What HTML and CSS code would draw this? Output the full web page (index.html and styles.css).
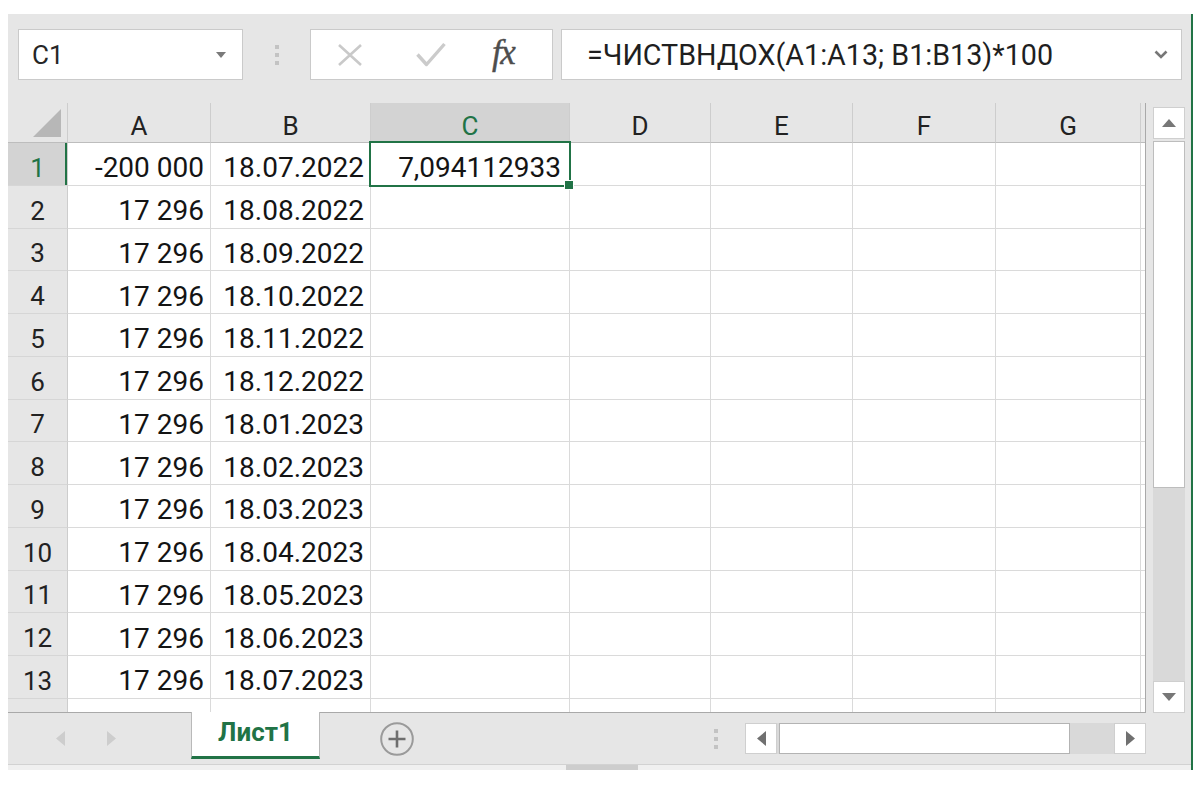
FILE: index.html
```html
<!DOCTYPE html>
<html lang="ru">
<head>
<meta charset="utf-8">
<title>Excel</title>
<link rel="stylesheet" href="styles.css">
</head>
<body>
<div class="app">
  <div class="fbar">
    <div class="namebox">
      <span>C1</span>
      <svg class="nb-caret" width="10" height="6" viewBox="0 0 10 6"><path d="M0 0H10L5 6Z" fill="#7a7a7a"/></svg>
    </div>
    <div class="grip"><i></i><i></i><i></i></div>
    <div class="fxbox">
      <svg class="ic-x" width="26" height="22" viewBox="0 0 26 22"><path d="M2 1L24 21M24 1L2 21" stroke="#c9c9c9" stroke-width="2.6" fill="none"/></svg>
      <svg class="ic-ok" width="30" height="25" viewBox="0 0 30 25"><path d="M1.5 12.5L10.5 22.5L28.5 2" stroke="#cbcbcb" stroke-width="3.4" fill="none" stroke-linejoin="round"/></svg>
      <span class="fx">fx</span>
    </div>
    <div class="formula">
      <span class="ftext">=ЧИСТВНДОХ(A1:A13; B1:B13)*100</span>
      <svg class="chev" width="14" height="9" viewBox="0 0 14 9"><path d="M1.5 1.5L7 7L12.5 1.5" stroke="#777" stroke-width="2.6" fill="none"/></svg>
    </div>
  </div>

  <div class="main">
    <div class="sheet">
      <div class="grid">
        <div class="corner"><svg width="28" height="28" viewBox="0 0 28 28"><path d="M28 0V28H0Z" fill="#b7b7b7"/></svg></div>
        <div class="ch">A</div><div class="ch">B</div><div class="ch selh">C</div><div class="ch">D</div><div class="ch">E</div><div class="ch">F</div><div class="ch">G</div><div class="ch"></div>

        <div class="rh selr">1</div><div class="c num">-200 000</div><div class="c num">18.07.2022</div><div class="c num sel">7,094112933</div><div class="c"></div><div class="c"></div><div class="c"></div><div class="c"></div><div class="c"></div>
        <div class="rh">2</div><div class="c num">17 296</div><div class="c num">18.08.2022</div><div class="c"></div><div class="c"></div><div class="c"></div><div class="c"></div><div class="c"></div><div class="c"></div>
        <div class="rh">3</div><div class="c num">17 296</div><div class="c num">18.09.2022</div><div class="c"></div><div class="c"></div><div class="c"></div><div class="c"></div><div class="c"></div><div class="c"></div>
        <div class="rh">4</div><div class="c num">17 296</div><div class="c num">18.10.2022</div><div class="c"></div><div class="c"></div><div class="c"></div><div class="c"></div><div class="c"></div><div class="c"></div>
        <div class="rh">5</div><div class="c num">17 296</div><div class="c num">18.11.2022</div><div class="c"></div><div class="c"></div><div class="c"></div><div class="c"></div><div class="c"></div><div class="c"></div>
        <div class="rh">6</div><div class="c num">17 296</div><div class="c num">18.12.2022</div><div class="c"></div><div class="c"></div><div class="c"></div><div class="c"></div><div class="c"></div><div class="c"></div>
        <div class="rh">7</div><div class="c num">17 296</div><div class="c num">18.01.2023</div><div class="c"></div><div class="c"></div><div class="c"></div><div class="c"></div><div class="c"></div><div class="c"></div>
        <div class="rh">8</div><div class="c num">17 296</div><div class="c num">18.02.2023</div><div class="c"></div><div class="c"></div><div class="c"></div><div class="c"></div><div class="c"></div><div class="c"></div>
        <div class="rh">9</div><div class="c num">17 296</div><div class="c num">18.03.2023</div><div class="c"></div><div class="c"></div><div class="c"></div><div class="c"></div><div class="c"></div><div class="c"></div>
        <div class="rh">10</div><div class="c num">17 296</div><div class="c num">18.04.2023</div><div class="c"></div><div class="c"></div><div class="c"></div><div class="c"></div><div class="c"></div><div class="c"></div>
        <div class="rh">11</div><div class="c num">17 296</div><div class="c num">18.05.2023</div><div class="c"></div><div class="c"></div><div class="c"></div><div class="c"></div><div class="c"></div><div class="c"></div>
        <div class="rh">12</div><div class="c num">17 296</div><div class="c num">18.06.2023</div><div class="c"></div><div class="c"></div><div class="c"></div><div class="c"></div><div class="c"></div><div class="c"></div>
        <div class="rh">13</div><div class="c num">17 296</div><div class="c num">18.07.2023</div><div class="c"></div><div class="c"></div><div class="c"></div><div class="c"></div><div class="c"></div><div class="c"></div>
        <div class="rh"></div><div class="c"></div><div class="c"></div><div class="c"></div><div class="c"></div><div class="c"></div><div class="c"></div><div class="c"></div><div class="c"></div>
      </div>
    </div>
    <div class="vscroll">
      <div class="sbtn"><svg width="14" height="8" viewBox="0 0 14 8"><path d="M7 0L14 8H0Z" fill="#777"/></svg></div>
      <div class="vthumb"></div>
      <div class="vtrack"></div>
      <div class="sbtn"><svg width="14" height="8" viewBox="0 0 14 8"><path d="M0 0H14L7 8Z" fill="#777"/></svg></div>
    </div>
  </div>

  <div class="tabbar">
    <div class="tabnav">
      <svg width="9" height="15" viewBox="0 0 9 15"><path d="M9 0V15L0 7.5Z" fill="#cdcdcd"/></svg>
      <svg width="9" height="15" viewBox="0 0 9 15"><path d="M0 0V15L9 7.5Z" fill="#cdcdcd"/></svg>
    </div>
    <div class="tab">Лист1</div>
    <div class="addsheet"><svg width="34" height="34" viewBox="0 0 34 34"><circle cx="17" cy="17" r="15.8" fill="none" stroke="#9a9a9a" stroke-width="2"/><path d="M17 8.5V25.5M8.5 17H25.5" stroke="#6e6e6e" stroke-width="2.6"/></svg></div>
    <div class="grip tgrip"><i></i><i></i><i></i></div>
    <div class="hscroll">
      <div class="hbtn"><svg width="9" height="15" viewBox="0 0 9 15"><path d="M9 0V15L0 7.5Z" fill="#707070"/></svg></div>
      <div class="hthumb"></div>
      <div class="htrack"></div>
      <div class="hbtn"><svg width="9" height="15" viewBox="0 0 9 15"><path d="M0 0V15L9 7.5Z" fill="#707070"/></svg></div>
    </div>
  </div>
  <div class="strip"><div class="handle"></div></div>
</div>
</body>
</html>
```

FILE: styles.css
```css
* { box-sizing: border-box; }

body {
  margin: 0;
  background: #ffffff;
  font-family: Roboto, "Liberation Sans", sans-serif;
  color: #1b1b1b;
}

.app {
  margin: 14px 0 0 8px;
  width: 1185px;
  height: 756px;
  background: #e6e6e6;
  border-right: 2px solid #217346;
  display: flex;
  flex-direction: column;
}

/* formula bar */
.fbar {
  height: 66px;
  padding: 15px 0 0 10px;
  display: flex;
  align-items: flex-start;
}

.namebox {
  width: 225px;
  height: 51px;
  background: #fff;
  border: 1px solid #cacaca;
  display: flex;
  align-items: center;
  justify-content: space-between;
  padding: 0 16px 0 13px;
  font-size: 26px;
  color: #262626;
}

.grip {
  width: 67px;
  height: 51px;
  display: flex;
  flex-direction: column;
  align-items: center;
  justify-content: center;
  gap: 4px;
}
.grip i {
  display: block;
  width: 4px;
  height: 4px;
  background: #c3c3c3;
}

.fxbox {
  width: 243px;
  height: 51px;
  background: #fff;
  border: 1px solid #cacaca;
  display: flex;
  align-items: center;
  padding-left: 26px;
}
.ic-x { margin-top: 1px; }
.ic-ok { margin-left: 53px; }
.fx {
  margin-left: 46px;
  font-family: "Liberation Serif", serif;
  font-style: italic;
  font-size: 35px;
  color: #4d4d4d;
  letter-spacing: -1.5px;
  line-height: 1;
  margin-top: -4px;
  -webkit-text-stroke: 0.4px #4d4d4d;
}

.formula {
  margin-left: 8px;
  width: 621px;
  height: 51px;
  background: #fff;
  border: 1px solid #cacaca;
  display: flex;
  align-items: center;
  justify-content: space-between;
  padding: 0 13px 0 25px;
}
.ftext {
  font-size: 28.7px;
  color: #1f1f1f;
  white-space: nowrap;
}

/* grid */
.main {
  margin-top: 23px;
  height: 610px;
  display: flex;
}

.sheet {
  width: 1138px;
  height: 610px;
  overflow: hidden;
  border-right: 1px solid #a9a9a9;
  border-bottom: 1px solid #a9a9a9;
}

.grid {
  display: grid;
  grid-template-columns: 60px 143px 160px 199px 141px 142px 143px 145px 40px;
  grid-template-rows: 40px repeat(14, 42.75px);
  background: #fff;
}

.corner {
  background: #e6e6e6;
  border-right: 1px solid #cdcdcd;
  border-bottom: 1px solid #bdbdbd;
  display: flex;
  align-items: flex-end;
  justify-content: flex-end;
  padding: 0 6px 5px 0;
}

.ch {
  background: #e6e6e6;
  border-right: 1px solid #cdcdcd;
  border-bottom: 1px solid #bdbdbd;
  display: flex;
  align-items: center;
  justify-content: center;
  font-size: 26px;
  padding-top: 6px;
  color: #222;
}
.ch.selh {
  background: #d3d3d3;
  color: #217346;
}

.rh {
  background: #e6e6e6;
  border-right: 1px solid #cdcdcd;
  border-bottom: 1px solid #d6d6d6;
  display: flex;
  align-items: center;
  justify-content: center;
  font-size: 26px;
  padding-top: 8px;
  color: #222;
}
.rh.selr {
  background: #d3d3d3;
  color: #217346;
  box-shadow: inset -2px 0 0 #217346;
}

.c {
  border-right: 1px solid #dadada;
  border-bottom: 1px solid #dadada;
  display: flex;
  align-items: center;
  justify-content: flex-end;
  padding: 8px 6px 0 0;
  font-size: 28px;
  white-space: nowrap;
  color: #141414;
}
.c.sel {
  position: relative;
  padding-right: 8px;
}
.c.sel::after {
  content: "";
  position: absolute;
  top: -2px;
  left: -2px;
  right: -2px;
  bottom: -2px;
  border: 2.5px solid #217346;
}
.c.sel::before {
  content: "";
  position: absolute;
  right: -5px;
  bottom: -5px;
  width: 8px;
  height: 8px;
  background: #217346;
  border: 1px solid #fff;
  z-index: 2;
}

/* vertical scrollbar */
.vscroll {
  margin-left: 7px;
  width: 32px;
  height: 610px;
  display: flex;
  flex-direction: column;
  padding-top: 4px;
}
.sbtn {
  height: 32px;
  flex: none;
  background: #fff;
  border: 1px solid #cfcfcf;
  display: flex;
  align-items: center;
  justify-content: center;
}
.vthumb {
  margin-top: 2px;
  height: 347px;
  flex: none;
  background: #fff;
  border: 1px solid #bdbdbd;
}
.vtrack {
  flex: 1;
  background: #d9d9d9;
}

/* tab bar */
.tabbar {
  height: 52px;
  border-bottom: 1px solid #d2d2d2;
  display: flex;
  align-items: center;
}
.tabnav {
  width: 183px;
  display: flex;
  align-items: center;
  gap: 42px;
  padding-left: 48px;
}
.tab {
  align-self: flex-start;
  margin-top: -1px;
  width: 129px;
  height: 47px;
  background: #fff;
  border-left: 1px solid #b9b9b9;
  border-right: 1px solid #b9b9b9;
  border-bottom: 3px solid #217346;
  display: flex;
  align-items: center;
  justify-content: center;
  font-size: 26px;
  font-weight: 700;
  color: #217346;
  padding-bottom: 4px;
}
.addsheet {
  margin-left: 60px;
  width: 34px;
  height: 34px;
  display: flex;
}
.tgrip {
  margin-left: 279px;
  width: 45px;
  height: 30px;
  gap: 4px;
}
.hscroll {
  margin-left: 7px;
  width: 401px;
  height: 31px;
  background: #d9d9d9;
  display: flex;
}
.hbtn {
  width: 32px;
  flex: none;
  background: #fff;
  border: 1px solid #cfcfcf;
  display: flex;
  align-items: center;
  justify-content: center;
}
.hthumb {
  margin-left: 2px;
  width: 291px;
  flex: none;
  background: #fff;
  border: 1px solid #b3b3b3;
}
.htrack {
  flex: 1;
}

.strip {
  height: 5px;
  background: #f0f0f0;
}
.handle {
  margin-left: 558px;
  width: 72px;
  height: 5px;
  background: #cdcdcd;
}
```
